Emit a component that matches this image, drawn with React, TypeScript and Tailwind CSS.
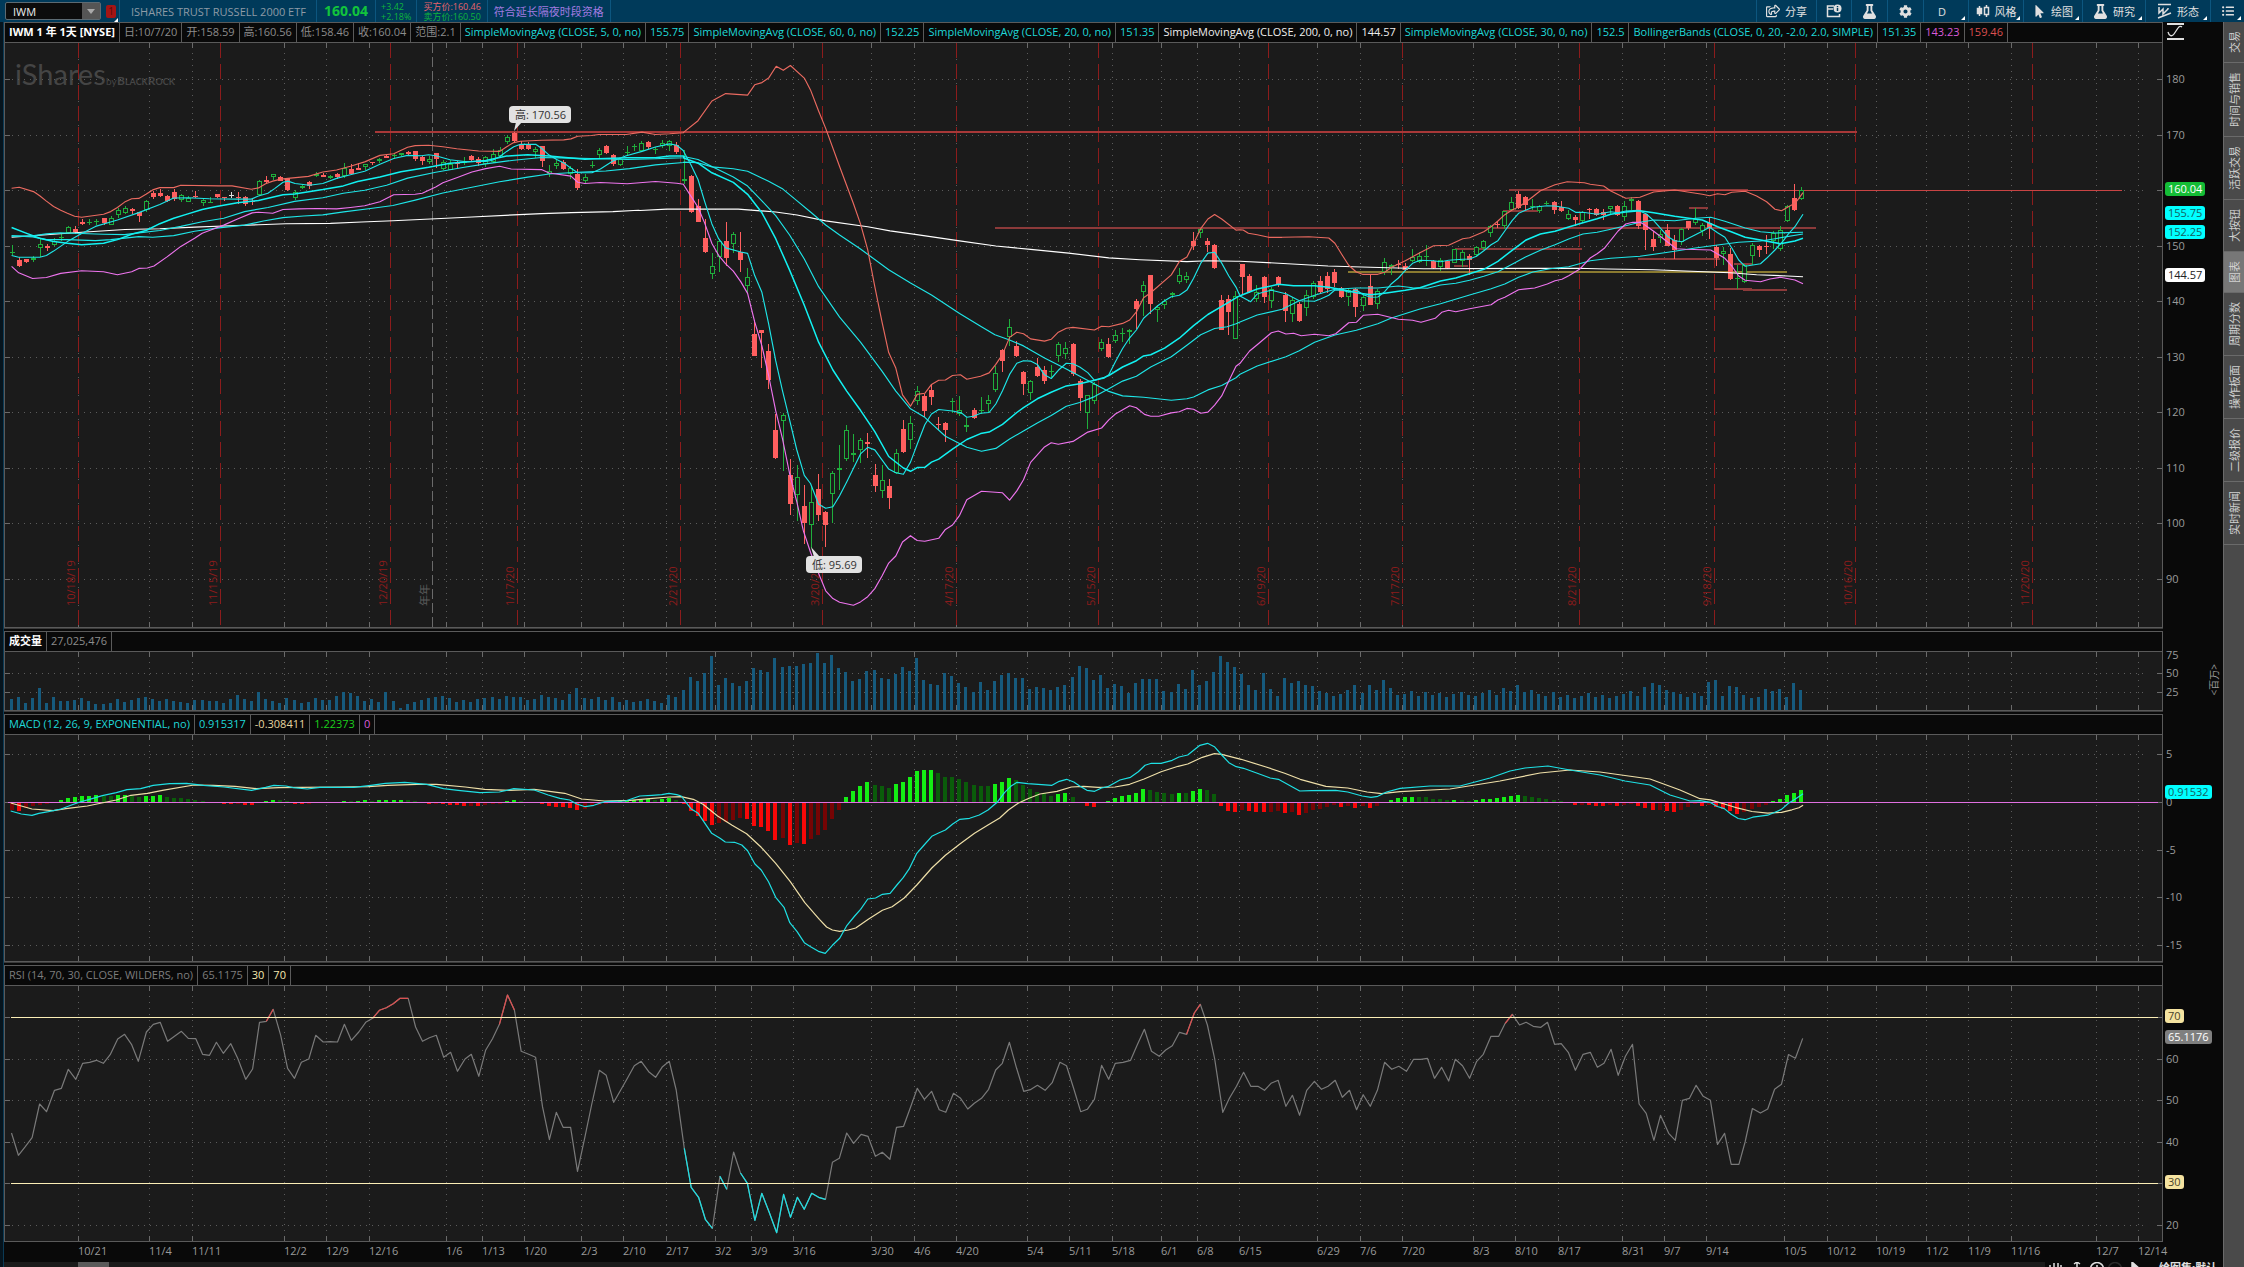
import React from "react";
import { FaRegShareSquare, FaFlask, FaCog, FaMousePointer, FaListUl } from "react-icons/fa";

/* ---------- coordinate frames for the series ---------- */

type Frame = [number, number, number, number];
const EARLY: Frame = [0, 100, 2.24, 2.958];
const SPRING: Frame = [640, 50, 2.24, 2.7034];
const LATE: Frame = [1240, 150, 2.613, 3];
const LOW_A: Frame = [0, 620, 2.063, 3];
const LOW_B: Frame = [640, 620, 2.063, 3];
const PX: Frame = [0, 0, 1, 1];
const TAIL: Frame = [1700, 620, 2.882, 2.4235];
const RSI_A: Frame = [0, 960, 1.742, 3];
const RSI_B: Frame = [880, 960, 1.8233, 3];

function trace(...parts: [Frame, string][]): string {
  return parts
    .map(([f, s]) =>
      s
        .trim()
        .split(/\s+/)
        .map((p) => {
          const [x, y] = p.split(",").map(Number);
          return `${(f[0] + x / f[2]).toFixed(1)},${(f[1] + y / f[3]).toFixed(1)}`;
        })
        .join(" "),
    )
    .join(" ");
}

const barX = (i: number) => Math.round(11.6 + i * 7.073);

/* ---------- price candles: colour, high, body top, body bottom, low ---------- */

const CANDLES_EARLY = `g430 450 452 458;r465 473 490 495;r470 471 478 482;g462 468 474 478;g408 426 437 464;r425 433 437 446;g408 416 430 432;g397 406 408 416;g374 377 392 397;r373 382 391 397;r352 362 367 370;g352 361 363 370;g351 359 361 370;r348 349 364 370;g344 349 369 371;g318 326 339 348;g313 320 333 336;r320 321 328 338;r330 332 342 362;g296 300 325 332;r270 275 287 292;r262 275 284 288;r282 284 298 302;r264 272 293 300;g278 281 297 302;g285 291 301 303;r270 285 287 290;g292 297 306 313;g287 301 304 306;r278 279 287 290;r286 288 290 300;w273 281 283 291;r272 288 290 308;r285 287 307 313;r293 300 302 312;g238 241 282 285;r226 237 243 248;g219 220 229 236;r225 229 239 241;r230 232 265 270;g265 273 289 297;g250 255 259 262;r240 242 255 262;g212 220 226 229;r215 222 227 229;g222 226 230 234;r216 219 227 235;g186 202 225 232;r190 203 218 222;r187 202 206 208;g188 190 199 206;r183 183 185 193;g172 174 181 186;r164 166 171 173;g160 164 166 175;g156 157 162 166;r152 155 159 166;r150 152 174 181;r166 169 179 192;g166 175 184 189;r156 158 174 200;g178 183 205 207;g178 189 206 208;r180 187 189 200;g170 184 187 193;r163 167 178 182;r170 174 187 195;g165 170 189 198;g145 161 184 187;g140 147 165 168;g105 110 125 130;r95 97 121 124;r122 130 144 148;r125 132 144 148;g138 146 153 173;r135 137 179 197;g192 210 218 228;g178 187 194 204;r178 184 203 206;g196 202 218 233;r205 218 260 266;g220 229 241 246;g180 191 196 201;g142 149 163 172;r134 137 156 159;r160 164 188 195;g172 176 193 194;g137 153 156 164;g131 135 138 150;g120 127 150 155;r122 125 138 145;g138 144 146 160;g119 128 135 142;g119 122 136 152;r124 134 153 159`;
const CANDLES_SPRING = `g270 350 353 363;r339 341 437 440;r402 422 464 466;r458 508 545 548;g548 585 606 620;g512 515 560 599;r465 515 562 585;g491 498 524 550;r492 545 569 599;g590 615 639 656;r730 768 826 828;r757 757 765 860;r795 814 891 916;r984 1027 1102 1107;g980 988 1004 1137;r1107 1150 1226 1258;g1122 1155 1204 1272;r1176 1233 1280 1336;g1180 1223 1285 1345;r1147 1188 1258 1272;r1246 1249 1283 1343;g1138 1144 1199 1279;g1068 1131 1136 1190;g1014 1028 1107 1112;g1038 1090 1096 1115;g1050 1055 1082 1117;r1036 1060 1064 1103;r1120 1150 1180 1195;g1122 1163 1193 1210;r1160 1179 1210 1242;g1080 1090 1144 1147;r1000 1025 1086 1090;g990 1009 1055 1080;g909 923 949 960;r930 936 975 993;r905 920 937 960;r993 1012 1014 1027;r1005 1008 1026 1060;g940 950 951 980;g935 972 984 990;g995 1014 1018 1032;r967 973 995 998;g937 974 977 983;g932 945 957 980;g855 872 920 925;r808 812 842 870;g728 748 777 800;r787 799 826 830;r869 871 902 932;g893 896 926 947;r832 857 880 884;r855 866 894 903;g852 868 870 883;g790 794 828 843;g790 805 823 834;r793 795 875 880;r890 895 940 975;g932 934 980 1024;g898 904 950 958;g780 790 807 815;r778 796 829 833;g757 770 787 793;g752 765 768 790;g755 756 762 795;r672 678 699 755;g625 634 655 720;r608 609 686 713;g690 696 704 734;g672 678 690 700;g655 658 662 670;g590 607 626 633;g600 612 622 630;r493 516 530 540;g482 484 496 507;r507 517 527 545;r525 527 588 592;r663 675 756 758;r662 673 707 770;g652 666 780 782;r578 579 615 660;r605 611 654 658;g635 655 674 682;r610 614 667 683;g640 645 678 697;r610 615 634 640;r655 662 705 736;g668 675 713 736;r680 687 732 734;g650 663 698 720;g625 631 668 672;r610 624 653 660;r600 611 645 658;r592 600 629 640`;
const CANDLES_LATE = `r412 415 440 445;g413 420 442 468;r413 418 470 500;g428 440 468 482;r374 408 464 466;g418 424 463 478;g325 337 366 374;g343 346 352 374;r330 342 345 358;r338 349 360 364;g298 320 332 336;g306 318 335 340;g285 317 322 348;r330 334 353 357;g324 329 352 364;r330 334 354 356;g296 298 338 340;g300 307 334 350;r312 318 331 376;g288 292 316 320;g270 274 295 300;g224 227 250 260;r214 221 226 234;g183 183 229 236;g142 157 180 184;r123 132 173 176;r138 141 164 180;g146 169 171 180;g165 168 184 190;g153 158 162 166;r153 156 181 192;r153 172 182 185;g180 193 208 210;r196 202 211 228;g184 185 214 220;r175 176 181 208;r174 178 194 198;r178 186 194 209;g168 169 178 192;r165 168 196 199;g154 168 202 213;g141 148 153 180;r150 153 227 237;r190 192 241 299;r242 267 290 303;g240 252 265 280;r222 240 287 288;r254 271 299 326;g234 236 276 284;r212 214 233 240;g174 208 220 226;g220 226 244 258;r200 220 233 267;r285 291 323 348;g292 304 311 346;r294 311 386 390;g346 384 388 418;g342 345 397 400;g280 286 317 345;r284 288 299 322;r256 289 291 312;g244 248 273 298;g228 240 298 303;g165 168 214 216;r102 144 180 182;g110 121 147 150`;

type Candle = { c: string; hi: number; top: number; bot: number; lo: number };
function parseCandles(s: string, f: Frame): Candle[] {
  return s.split(";").map((t) => {
    const [hi, top, bot, lo] = t
      .slice(1)
      .split(" ")
      .map((n) => Math.round(f[1] + Number(n) / f[3]));
    return { c: t[0], hi, top, bot, lo };
  });
}
const CANDLES = [
  ...parseCandles(CANDLES_EARLY, EARLY),
  ...parseCandles(CANDLES_SPRING, SPRING),
  ...parseCandles(CANDLES_LATE, LATE),
];

/* ---------- overlays ---------- */

const UPPER = trace(
  [EARLY, "26,261 43,258 75,271 89,283 104,299 120,315 136,326 151,335 167,344 183,347 232,338 248,330 263,318 279,302 295,292 311,291 327,279 342,266 358,259 389,259 405,252 490,254 520,254 563,264 579,260 595,248 611,240 629,234 645,232 691,226 723,213 754,207 785,196 817,183 851,164 882,159 913,140 930,135 960,134 992,138 1023,144 1072,151 1119,152 1135,138 1151,126 1166,122 1213,119 1263,118 1279,115 1294,107 1325,105 1341,102 1403,102 1438,95 1468,102 1500,100 1531,97"],
  [SPRING, "98,222 130,191 161,138 192,118 241,122 257,94 273,88 288,76 305,44 321,55 337,42 368,76 382,108 400,165 416,212 447,315 478,415 494,470 510,540 526,640 542,735 557,818 573,860 588,932 606,963 621,931 638,928 653,904 669,893 684,892 700,880 718,878 732,890 763,882 782,873 797,850 812,823 828,777 844,763 859,767 875,781 906,787 921,782 937,763 955,752 970,750 1018,757 1034,747 1050,748 1081,739 1097,730 1112,708 1128,670 1144,656 1190,608 1208,572 1225,560 1240,523 1256,483 1272,457 1287,445 1303,457 1335,487"],
  [LATE, "0,239 8,240 22,250 45,254 75,262 110,262 180,260 232,264 248,280 268,317 284,346 304,366 320,373 360,373 378,367 396,352 414,342 432,332 451,320 470,308 506,287 545,286 582,266 600,263 637,245 656,230 674,213 692,194 711,180 728,171 746,157 765,140 785,122 823,104 855,95 900,98 915,103 950,108 969,123 1008,145 1045,142 1081,126 1136,120 1208,133 1227,137 1248,131 1267,134 1285,127 1320,124 1350,138 1376,155 1398,178 1415,182 1432,171 1450,160 1460,146 1471,128"],
);
const LOWER = trace(
  [EARLY, "26,492 42,511 73,528 104,525 136,513 183,505 232,508 263,517 295,508 311,498 330,497 345,491 374,464 405,433 436,409 453,394 469,386 501,370 532,352 565,334 579,332 611,335 634,324 670,322 710,321 754,322 785,318 817,313 851,301 882,280 930,279 946,276 976,257 992,245 1023,230 1057,213 1088,203 1119,196 1145,204 1213,206 1230,216 1279,225 1294,243 1310,247 1345,244 1405,248 1468,241 1516,246 1531,249"],
  [SPRING, "98,365 114,395 130,425 145,468 161,523 176,555 192,578 209,598 226,627 241,658 257,735 273,800 288,880 304,975 319,1050 335,1145 351,1220 366,1300 382,1358 400,1415 416,1462 432,1483 447,1493 478,1501 494,1492 510,1478 526,1456 542,1422 557,1387 573,1368 588,1330 606,1313 621,1326 638,1328 669,1320 684,1296 700,1284 716,1258 732,1216 765,1193 812,1197 828,1217 844,1192 859,1162 875,1115 906,1073 921,1062 937,1066 970,1058 1003,1033 1034,1022 1050,1000 1065,984 1097,962 1112,967 1130,985 1144,990 1162,990 1190,981 1208,978 1225,969 1240,971 1256,982 1272,979 1287,960 1303,935 1319,895 1335,855"],
  [LATE, "0,640 25,603 45,584 82,548 100,543 120,552 140,550 160,557 195,553 232,557 250,551 284,518 304,517 322,496 360,493 414,508 451,511 473,517 510,505 527,487 545,481 564,485 600,476 656,464 674,450 692,442 711,430 728,419 770,414 803,402 823,392 841,388 859,377 887,358 915,324 933,311 952,295 988,243 1008,222 1026,217 1045,217 1055,223 1081,244 1118,277 1140,296 1165,298 1230,300 1248,312 1267,325 1285,348 1303,378 1320,391 1360,395 1385,387 1412,382 1450,390 1471,401"],
);
const SMA5 = trace(
  [EARLY, "26,460 42,465 89,465 104,460 120,447 151,419 183,395 214,374 263,355 311,333 358,309 389,290 421,289 469,292 532,293 563,293 579,284 600,276 615,262 634,243 645,240 661,247 693,252 723,247 754,232 785,221 817,211 851,190 882,173 913,164 944,165 960,162 976,165 1008,177 1040,182 1088,182 1103,178 1119,168 1135,152 1151,138 1166,131 1200,131 1213,143 1230,163 1247,176 1263,186 1279,202 1294,215 1326,215 1345,204 1373,180 1403,165 1438,152 1468,139 1500,130 1516,134 1531,150"],
  [SPRING, "98,275 114,310 130,350 145,410 161,470 176,510 192,535 226,546 241,550 257,610 273,655 288,740 304,840 319,920 335,1000 351,1080 368,1150 382,1172 400,1228 416,1239 432,1235 447,1205 463,1168 494,1092 510,1074 526,1081 542,1108 557,1133 573,1143 590,1147 606,1114 621,1066 638,1013 653,984 669,972 700,976 720,981 732,993 747,990 763,982 782,980 797,957 812,921 828,877 844,847 859,840 875,841 890,850 906,878 921,888 937,866 955,847 970,848 985,857 1003,872 1018,893 1040,887 1050,878 1065,843 1081,807 1097,778 1112,757 1128,725 1144,708 1159,692 1175,678 1190,667 1208,663 1225,649 1240,617 1256,577 1272,549 1287,547 1303,576 1319,611 1335,641"],
  [LATE, "0,438 28,455 45,432 65,425 82,421 120,431 155,452 195,454 212,446 232,436 248,420 268,421 284,427 304,420 322,434 342,442 360,441 378,425 396,401 414,384 432,361 451,340 470,331 506,332 524,335 545,331 582,328 600,327 618,319 637,302 656,284 674,272 692,243 711,212 728,190 746,181 765,172 803,167 823,168 859,175 877,187 896,187 933,193 969,185 988,188 1008,183 1040,181 1062,192 1081,212 1099,235 1118,260 1136,272 1155,275 1173,264 1190,254 1208,244 1227,232 1248,248 1267,262 1285,294 1303,330 1320,349 1360,341 1376,325 1398,300 1420,272 1432,253 1450,230 1471,193"],
);
const SMA20 = trace(
  [EARLY, "26,377 57,393 89,409 120,419 151,424 183,428 232,424 263,413 295,397 327,386 358,366 389,350 421,337 453,324 485,315 532,304 579,297 634,280 660,278 723,265 769,254 801,241 851,228 898,212 960,199 1008,187 1088,179 1135,166 1182,162 1230,166 1279,172 1310,175 1405,171 1468,171 1500,166 1531,166"],
  [SPRING, "98,292 130,306 161,332 209,358 241,390 273,440 304,510 335,595 368,690 400,790 432,865 463,922 494,974 526,1032 557,1099 590,1130 606,1139 621,1129 638,1128 653,1114 669,1106 700,1079 732,1053 763,1037 782,1033 812,1012 844,980 859,967 890,943 921,925 955,908 985,902 1018,893 1040,885 1050,880 1081,857 1112,840 1128,827 1144,824 1175,806 1208,779 1240,745 1272,715 1303,693 1335,670"],
  [LATE, "0,437 45,417 100,403 140,407 195,407 232,412 268,419 304,428 342,434 378,430 432,421 470,413 524,393 564,384 600,371 637,358 674,334 711,301 746,271 785,252 823,244 859,231 896,218 933,206 969,193 1008,186 1045,182 1081,188 1136,199 1173,205 1208,210 1248,230 1285,246 1320,262 1360,270 1412,281 1450,273 1471,265"],
);
const SMA30 = trace(
  [EARLY, "26,403 73,402 104,396 136,393 183,395 232,397 279,398 311,393 358,386 405,374 453,360 501,350 548,330 600,318 660,300 723,289 769,276 817,267 866,252 913,231 976,214 1040,199 1088,189 1151,178 1213,170 1279,172 1325,173 1405,176 1468,174 1500,172 1531,171"],
  [SPRING, "98,288 130,296 161,315 209,343 241,368 273,408 304,448 335,500 368,565 400,640 447,722 494,790 542,868 573,922 606,970 638,993 653,1010 684,1044 732,1074 765,1085 797,1077 828,1052 859,1030 890,1008 921,988 955,963 985,953 1018,937 1050,916 1081,895 1112,882 1144,857 1190,829 1225,798 1256,770 1287,753 1315,748 1335,740"],
  [LATE, "0,516 45,495 110,478 155,452 195,436 248,418 304,414 360,414 414,408 451,413 490,415 524,405 564,400 600,391 637,379 674,365 711,343 746,321 785,301 823,284 859,267 896,252 933,247 969,238 1008,227 1045,217 1081,210 1136,212 1190,205 1230,202 1267,214 1320,234 1360,245 1398,249 1471,247"],
);
const SMA60 = trace(
  [EARLY, "26,401 73,405 104,413 151,413 214,416 248,413 311,404 342,406 389,401 436,388 485,379 548,370 590,358 634,348 680,343 723,340 770,331 830,321 880,312 930,296 992,275 1057,258 1119,242 1182,228 1230,219 1294,214 1357,210 1410,203 1468,192 1531,185"],
  [SPRING, "98,303 130,305 161,316 209,321 241,328 288,355 320,376 352,408 384,440 416,473 447,500 494,538 557,594 606,630 653,662 716,712 763,747 795,770 828,784 859,800 906,833 955,862 1018,903 1050,923 1081,935 1128,939 1190,947 1225,943 1240,938 1272,919 1303,907 1335,886"],
  [LATE, "0,673 45,648 120,620 155,602 195,577 248,555 304,541 360,521 396,504 470,477 524,461 600,435 656,416 692,402 728,382 765,366 810,356 859,350 915,332 969,325 1045,319 1118,307 1190,294 1248,285 1303,277 1360,273 1398,266 1471,252"],
);
const SMA200 = trace(
  [EARLY, "26,406 120,397 183,391 280,383 358,381 436,376 516,372 580,369 640,366 740,365 810,361 880,357 1000,350 1057,346 1151,340 1213,336 1280,333 1373,330 1430,326"],
  [SPRING, "0,434 60,430 220,430 304,438 352,446 416,462 510,478 560,489 620,499 716,516 797,530 875,539 960,549 1050,562 1120,567 1225,572 1272,570 1335,571"],
  [LATE, "0,334 90,339 230,348 340,352 480,356 880,355 960,357 1080,359 1180,364 1280,368 1350,374 1430,378 1471,380"],
);

/* x1, x2, y, colour, thickness */
const LEVELS: [number, number, number, string, number][] = [
  [375, 1857, 132, "#a83838", 2],
  [995, 1816, 228, "#8c3a3a", 2],
  [1509, 1748, 190, "#8c3a3a", 2],
  [1557, 2122, 191, "#c84444", 1],
  [1503, 1538, 211, "#8c3a3a", 2],
  [1455, 1582, 249, "#8c3a3a", 2],
  [1454, 1468, 266, "#8c3a3a", 2],
  [1348, 1787, 272, "#8a7a30", 2],
  [1638, 1720, 259, "#8c3a3a", 2],
  [1689, 1708, 208, "#8c3a3a", 2],
  [1734, 1752, 264, "#8c3a3a", 2],
  [1714, 1752, 289, "#8c3a3a", 2],
  [1743, 1787, 290, "#8c3a3a", 2],
];

/* ---------- volume, MACD, RSI ---------- */

const VOLUME_TOPS = [
  237, 231, 249, 234, 204, 249, 231, 243, 243, 240, 234, 243, 252, 252, 249, 237, 246, 240, 234, 231, 237, 243, 237, 243, 246, 249, 240, 240, 243, 243, 249, 237, 225, 237, 243, 216, 237, 243, 249, 234, 240, 249, 246, 234, 240, 240, 228, 216, 219, 228, 243, 237, 246, 216, 243, 264, 252, 246, 240, 234, 231, 228, 234, 246, 240, 246, 237, 234, 231, 237, 228, 231, 231, 240, 237, 225, 231, 234, 240, 222, 204, 234, 237, 231, 240, 231, 246, 240, 246, 243, 237, 243, 249, 225, 231, 210, 171, 183, 159, 108,
  195, 174, 189, 198, 183, 144, 150, 156, 114, 141, 138, 138, 132, 129, 99, 129, 105, 144, 156, 183, 177, 153, 150, 174, 177, 162, 141, 153, 114, 180, 192, 195, 159, 168, 189, 201, 216, 186, 210, 183, 165, 159, 174, 174, 207, 201, 204, 210, 201, 195, 171, 138, 144, 180, 165, 204, 192, 198, 219, 189, 177, 177, 177, 213, 216, 192, 207, 150, 195, 183, 156, 108, 126, 141, 162, 195, 210, 159, 207, 228, 174, 189, 183, 195, 198, 213, 219, 228, 222, 210, 195, 219, 195, 210, 180, 204, 225,
  222, 213, 228, 216, 225, 219, 231, 222, 216, 225, 228, 219, 210, 225, 204, 213, 195, 216, 210, 222, 228, 216, 231, 225, 234, 228, 219, 231, 225, 234, 228, 222, 213, 228, 201, 189, 195, 210, 216, 222, 231, 219,
  228, 186, 180, 228, 198, 201, 225, 234, 231, 207, 213, 207, 231, 189, 210,
];

const HIST = [
  -20, -24, -14, -8, -5, -3, 0, 7, 13, 16, 18, 19, 20, 19, 18, 21, 22, 17, 16, 17, 19, 20, 16, 13, 12, 10, 7, 4, 1, 0, -2, -3, -2, -5, -6, -1, 4, 7, 5, 3, -2, -4, -3, -1, 0, 0, 1, 4, 3, 4, 4.5, 4, 5, 6, 6.5, 7, 5, 3, 0, -2, -2, -4, -5, -7, -8, -7.5, -9, -6, -4, -2, 4, 7, 3, -1, -1, -4, -10, -11, -13, -14, -20, -19, -9, -5, -3, 1, 2, 3, 5, 6, 8, 7, 10, 10.5, 7, -4, -23, -40, -53, -65,
  -60, -56, -50, -45, -47, -68, -72, -83, -110, -106, -125, -120, -122, -107, -95, -80, -47, -20, 16, 34, 49, 61, 52, 49, 43, 55, 61, 76, 94, 94.5, 97, 88, 76, 75.8, 70, 61, 52, 49, 48.8, 55, 61, 73, 67, 52, 40, 31, 28, 19, 25, 25.5, 16, 1, -8, -11, -1, 4, 13, 19, 22, 28, 40, 36, 31, 28, 25, 28, 27.5, 34, 40, 37, 25, -8, -23, -26, -22, -23, -26, -26.5, -26, -23, -29, -28, -35, -29, -20, -17, -13, -7, -11, -8, -14, -9, -14, -10, 0, 7, 13,
  14, 15, 15, 14, 9, 8, 5, 7, 6, 4, 5, 8, 10, 12, 14, 18, 20, 17, 15, 12, 10, 5, 2, -1, -5, -5, -6, -8, -9, -7, -9, -5, -2, -10, -16, -22, -20, -24, -26, -20, -12, -4,
  -8, -7, -12, -17, -25, -32, -27, -17, -11, -5, 3, 9, 22, 28, 36,
];

const MACD = trace(
  [LOW_A, "22,573 44,582 66,586 80,580 100,575 126,567 146,556 165,546 190,536 211,527 240,518 262,509 290,506 316,496 350,491 385,490 420,496 462,501 519,511 548,502 565,496 590,498 605,503 634,507 660,502 700,502 730,502 765,496 795,490 835,487 880,493 915,506 945,511 990,518 1030,516 1060,506 1102,510 1131,525 1155,535 1175,540 1190,552 1207,560 1225,556 1247,545 1290,543 1320,528 1345,526 1365,524 1380,520 1396,524"],
  [LOW_B, "85,528 105,566 120,580 148,640 165,655 176,666 195,667 210,675 222,692 237,732 250,750 265,785 280,832 297,862 309,908 324,935 339,968 352,980 368,994 382,1000 397,976 412,955 427,916 443,888 455,868 470,837 486,834 500,823 516,820 530,795 543,773 556,745 571,700 586,675 602,649 617,638 630,630 645,612 660,598 680,595 700,585 718,570 738,545 752,518 765,499 778,487 800,491 850,496 865,484 880,478 895,486 907,498 922,511 938,514 952,504 965,500 990,480 1012,472 1028,455 1042,436 1055,430 1075,430 1098,421 1112,411 1130,405 1155,376 1171,370 1185,380 1200,405 1215,428 1230,440 1245,445 1272,459 1300,474 1317,478 1345,500 1361,513 1385,512 1435,511 1460,516 1490,528 1508,532 1522,529 1540,516 1568,505"],
  [PX, "1430,786 1460,786 1490,778 1510,771 1525,768 1548,766 1570,770 1600,775 1625,781 1650,785 1670,795 1690,801"],
  [TAIL, "0,438 30,442 50,452 70,457 90,471 110,481 130,484 152,478 195,473 235,459 255,444 275,434 297,421"],
);
const SIGNAL = trace(
  [LOW_A, "22,549 66,567 110,572 136,566 180,558 240,540 270,526 304,520 335,511 400,495 440,496 485,499 530,506 575,503 620,502 700,501 760,500 800,496 860,493 900,493 960,501 1000,508 1050,511 1102,508 1165,520 1200,537 1247,543 1300,541 1340,536"],
  [LOW_B, "60,531 85,530 110,538 130,553 160,588 190,616 220,641 250,682 280,730 310,785 340,848 370,898 385,921 397,930 412,934 430,930 445,924 471,898 500,871 520,860 545,834 571,795 602,744 630,706 660,672 690,640 718,615 742,594 760,570 780,550 800,536 825,522 860,514 890,501 915,499 945,502 980,501 1010,493 1040,477 1075,455 1110,439 1130,432 1160,412 1185,401 1200,403 1240,418 1290,440 1330,460 1362,478 1415,499 1460,504 1500,516 1530,521 1568,515"],
  [PX, "1450,789 1500,781 1540,773 1570,770 1600,772 1650,779 1680,790"],
  [TAIL, "0,433 30,436 70,446 110,456 150,464 195,468 235,466 265,460 285,455 297,449"],
);

const RSI = trace(
  [RSI_A, "20,519 32,586 44,560 56,533 69,432 81,455 95,391 107,385 119,328 132,358 144,310 156,307 168,301 180,310 192,284 205,237 217,223 229,253 241,304 255,216 267,193 279,187 292,244 304,229 316,214 328,235 341,236 353,283 365,286 377,247 389,280 402,251 414,295 428,358 440,327 452,187 464,184 476,148 489,226 501,325 513,355 525,307 538,297 550,226 563,246 575,245 588,246 600,193 612,241 625,216 637,187 649,175 661,151 673,143 685,131 697,115 711,115 724,201 736,244 748,233 760,226 773,292 785,277 797,334 810,297 821,283 834,349 846,271 858,236 870,193 884,105 896,150 908,274 921,283 933,292 945,440 957,539 969,457 981,502 994,502 1006,634 1019,530 1031,432 1044,331 1056,346 1069,427 1081,391 1093,355 1105,317 1117,304 1130,335 1142,352 1154,320 1166,304 1178,390 1192,565 1204,682 1217,712 1229,779 1241,805 1254,649 1266,688 1278,576 1290,639 1302,670 1315,781 1327,700 1340,757 1353,818 1365,703 1377,772 1389,712 1401,748 1414,700 1426,712 1438,718 1450,607 1462,595 1475,519 1487,550 1500,523 1512,529 1525,589 1537,577"],
  [RSI_B, "18,598 30,502 43,499 56,440 68,385 81,418 94,394 108,449 120,457 134,400 147,415 160,447 172,430 185,415 198,388 211,330 223,310 236,247 249,325 262,394 274,389 287,376 301,391 314,368 328,307 340,317 353,385 366,455 378,448 391,418 404,316 417,358 429,310 443,307 457,301 469,255 482,208 495,274 509,289 521,270 533,257 546,217 559,223 573,159 584,133 597,195 610,295 625,457 637,415 650,379 663,337 676,379 689,379 701,391 713,370 726,361 740,439 752,406 765,466 778,391 792,364 805,388 817,379 830,361 843,412 856,391 869,449 881,404 894,439 907,391 920,307 933,328 946,319 960,334 973,298 986,298 998,295 1011,355 1024,322 1037,363 1049,298 1062,317 1075,355 1088,304 1100,283 1114,229 1128,229 1140,190 1153,163 1166,195 1178,187 1191,199 1205,202 1217,187 1230,253 1242,251 1255,277 1268,331 1282,283 1295,277 1308,322 1320,310 1333,268 1346,346 1359,289 1372,253 1384,432 1397,460 1411,541 1423,466 1438,520 1450,541 1463,421 1476,415 1488,376 1501,409 1514,421 1527,553 1540,520 1552,613 1566,613"],
  [TAIL, "112,1319 130,1265 151,1184 174,1195 195,1185 215,1137 235,1125 255,1053 275,1062 296,1014"],
);
const RSI_HOT = [
  trace([RSI_A, "464,184 476,148"]),
  trace([RSI_A, "649,175 661,151 673,143 685,131 697,115 711,115"]),
  trace([RSI_A, "870,193 884,105 896,150"]),
  trace([RSI_B, "559,223 573,159 584,133"]),
  trace([RSI_B, "1140,190 1153,163"]),
];
const RSI_COLD = [
  trace([RSI_A, "1192,565 1204,682 1217,712 1229,779 1241,805"]),
  trace([RSI_A, "1254,649 1266,688"]),
  trace([RSI_A, "1290,639 1302,670 1315,781 1327,700 1340,757 1353,818 1365,703 1377,772 1389,712 1401,748 1414,700 1426,712 1438,718"]),
];

/* ---------- time axis ---------- */

const DATES: [number, string][] = [
  [78, "10/21"], [149, "11/4"], [192, "11/11"], [284, "12/2"], [326, "12/9"], [369, "12/16"],
  [446, "1/6"], [482, "1/13"], [524, "1/20"], [581, "2/3"], [623, "2/10"], [666, "2/17"],
  [715, "3/2"], [751, "3/9"], [793, "3/16"], [871, "3/30"], [914, "4/6"], [956, "4/20"],
  [1027, "5/4"], [1069, "5/11"], [1112, "5/18"], [1161, "6/1"], [1197, "6/8"], [1239, "6/15"],
  [1317, "6/29"], [1360, "7/6"], [1402, "7/20"], [1473, "8/3"], [1515, "8/10"], [1558, "8/17"],
  [1622, "8/31"], [1664, "9/7"], [1706, "9/14"], [1784, "10/5"], [1827, "10/12"], [1876, "10/19"],
  [1926, "11/2"], [1968, "11/9"], [2011, "11/16"], [2096, "12/7"], [2138, "12/14"],
];
const EXPIRIES: [number, string][] = [
  [78, "10/18/19"], [220, "11/15/19"], [390, "12/20/19"], [517, "1/17/20"], [680, "2/21/20"],
  [822, "3/20/20"], [956, "4/17/20"], [1098, "5/15/20"], [1268, "6/19/20"], [1402, "7/17/20"],
  [1579, "8/21/20"], [1714, "9/18/20"], [1855, "10/16/20"], [2032, "11/20/20"],
];

const L = 5;
const R = 2162;

function Grid({ top, bottom, rows, ticks }: { top: number; bottom: number; rows: number[]; ticks?: number[] }) {
  return (
    <g shapeRendering="crispEdges">
      {rows.map((y) => (
        <line key={y} x1={L + 7} x2={R - 15} y1={y + 0.5} y2={y + 0.5} stroke="#5c5c5c" strokeDasharray="1 5" />
      ))}
      {(ticks ?? rows).map((y) => (
        <path key={y} d={`M${L} ${y + 0.5}h5M${R - 5} ${y + 0.5}h5`} stroke="#6a6a6a" />
      ))}
      {DATES.map(([x]) => (
        <g key={x}>
          <line x1={x + 0.5} x2={x + 0.5} y1={top + 10} y2={bottom - 8} stroke="#5c5c5c" strokeDasharray="1 5" />
          <path d={`M${x + 0.5} ${top}v5M${x + 0.5} ${bottom - 5}v5`} stroke="#6a6a6a" />
        </g>
      ))}
    </g>
  );
}

function PlotSvg({ top, height, label, children }: { top: number; height: number; label: string; children: React.ReactNode }) {
  return (
    <svg
      role="img"
      aria-label={label}
      viewBox={`${L} ${top} ${R - L} ${height}`}
      preserveAspectRatio="none"
      height={height}
      className="block w-full"
    >
      {children}
    </svg>
  );
}

/* ---------- shared page pieces ---------- */

type Cell = { t: string; c: string; b?: boolean };

function Legend({ cells }: { cells: Cell[] }) {
  return (
    <div className="flex h-[21px] overflow-hidden border-y border-[#5a5a5a] bg-[#090909] text-[11px] leading-[18px]">
      {cells.map((cell, i) => (
        <span
          key={i}
          className={`shrink-0 border-r border-[#5a5a5a] px-1 whitespace-nowrap ${cell.c} ${cell.b ? "font-bold" : ""}`}
        >
          {cell.t}
        </span>
      ))}
    </div>
  );
}

type Tag = { y: number; t: string; c: string };

function Axis({ top, height, labels, tags = [], children }: { top: number; height: number; labels: [number, string][]; tags?: Tag[]; children?: React.ReactNode }) {
  return (
    <div className="relative w-[60px] shrink-0 text-[11px] leading-[14px] text-[#9a9a9a]" style={{ height }}>
      {labels.map(([y, t]) => (
        <span key={t} className="absolute left-[3px] -translate-y-1/2" style={{ top: y - top }}>
          {t}
        </span>
      ))}
      {tags.map((tag) => (
        <span key={tag.t} className={`absolute left-[2px] -translate-y-1/2 rounded-[3px] px-[3px] ${tag.c}`} style={{ top: tag.y - top }}>
          {tag.t}
        </span>
      ))}
      {children}
    </div>
  );
}

function Panel({ cells, axis, children }: { cells: Cell[]; axis: React.ReactNode; children: React.ReactNode }) {
  return (
    <section className="flex">
      <div className="min-w-0 flex-1 border-r border-l border-[#5a5a5a]">
        <Legend cells={cells} />
        <div className="border-b border-[#5a5a5a] bg-[#1b1b1b]">{children}</div>
      </div>
      {axis}
    </section>
  );
}

const Divider = () => <div className="mr-[60px] h-[3px] border-t border-[#3a3a3a] bg-[#090909]" />;

function ToolButton({ w, label, text, corner, children }: { w: string; label: string; text?: string; corner?: boolean; children?: React.ReactNode }) {
  return (
    <button aria-label={label} className={`relative flex shrink-0 items-center justify-center gap-[5px] border-l border-[#0c567f] ${w}`}>
      {children}
      {text && <span>{text}</span>}
      {corner && <i className="absolute right-[3px] bottom-[2px] border-b-4 border-l-4 border-b-white border-l-transparent" />}
    </button>
  );
}

const CYAN = "text-[#1fd8d8]";
const GREY = "text-[#8c8c8c]";

const MAIN_CELLS: Cell[] = [
  { t: "IWM 1 年 1天 [NYSE]", c: "text-white", b: true },
  { t: "日:10/7/20", c: GREY },
  { t: "开:158.59", c: GREY },
  { t: "高:160.56", c: GREY },
  { t: "低:158.46", c: GREY },
  { t: "收:160.04", c: GREY },
  { t: "范围:2.1", c: GREY },
  { t: "SimpleMovingAvg (CLOSE, 5, 0, no)", c: CYAN },
  { t: "155.75", c: CYAN },
  { t: "SimpleMovingAvg (CLOSE, 60, 0, no)", c: CYAN },
  { t: "152.25", c: CYAN },
  { t: "SimpleMovingAvg (CLOSE, 20, 0, no)", c: CYAN },
  { t: "151.35", c: CYAN },
  { t: "SimpleMovingAvg (CLOSE, 200, 0, no)", c: "text-[#eeeeee]" },
  { t: "144.57", c: "text-[#eeeeee]" },
  { t: "SimpleMovingAvg (CLOSE, 30, 0, no)", c: CYAN },
  { t: "152.5", c: CYAN },
  { t: "BollingerBands (CLOSE, 0, 20, -2.0, 2.0, SIMPLE)", c: CYAN },
  { t: "151.35", c: CYAN },
  { t: "143.23", c: "text-[#d95bd9]" },
  { t: "159.46", c: "text-[#dc5050]" },
];

const TABS = ["交易", "时间与销售", "活跃交易", "大按钮", "图表", "周期分数", "操作板面", "二级报价", "实时新闻"];

function TopBar() {
  return (
    <header className="flex h-[22px] shrink-0 bg-[#003a5a] text-[11px] leading-none text-[#e0e0e0]">
      <div className="flex items-center pl-[5px]">
        <div className="flex h-[18px] w-24 items-center rounded-[2px] border border-[#5c6a72] bg-[#0c0c0c]">
          <input aria-label="Symbol" defaultValue="IWM" className="w-0 flex-1 bg-transparent pl-[7px] text-[11px] text-[#eeeeee] outline-none" />
          <button aria-label="Open symbol list" className="flex h-full w-[18px] items-center justify-center bg-[#555555]">
            <i className="border-x-[4px] border-t-[5px] border-x-transparent border-t-[#aaaaaa]" />
          </button>
        </div>
        <button aria-label="Link group 1" className="relative ml-[5px] h-[13px] w-[10px] rounded-[2px] bg-[#a31515] text-[10px] text-[#5a0808]">
          1
          <i className="absolute -right-[2px] -bottom-[4px] border-b-4 border-l-4 border-b-white border-l-transparent" />
        </button>
      </div>
      <div className="ml-[3px] flex items-center border-l border-[#0c567f] pr-[10px] pl-[11px] text-[11px] text-[#8e9ba6]">ISHARES TRUST RUSSELL 2000 ETF</div>
      <div className="flex items-center border-l border-[#0c567f] px-[7px] text-[14px] font-bold text-[#12c43c]">160.04</div>
      <div className="flex flex-col justify-center gap-px border-l border-[#0c567f] px-[5px] text-[9px] leading-[9px] text-[#10b43c]">
        <span>+3.42</span>
        <span>+2.18%</span>
      </div>
      <div className="flex flex-col justify-center gap-px border-l border-[#0c567f] px-[6px] text-[9px] leading-[9px]">
        <span className="text-[#e8636b]">买方价:160.46</span>
        <span className="text-[#10b43c]">卖方价:160.50</span>
      </div>
      <div className="flex items-center border-x border-[#0c567f] px-[6px] text-[11px] text-[#a07be0]">符合延长隔夜时段资格</div>
      <nav className="ml-auto flex">
        <ToolButton w="w-[60px]" label="分享" text="分享">
          <FaRegShareSquare size={14} />
        </ToolButton>
        <ToolButton w="w-[35px]" label="Calendar info">
          <svg width="16" height="14" viewBox="0 0 16 14" fill="none" stroke="currentColor" strokeWidth="1.5">
            <path d="M8 2H1.5v10.500h12V10M1.500 5H7" />
            <circle cx="11.500" cy="4.500" r="4" fill="currentColor" stroke="none" />
            <path d="M11.500 2v1.200M11.500 4v3" stroke="#003a5a" />
          </svg>
        </ToolButton>
        <ToolButton w="w-9" label="Lab">
          <FaFlask size={15} />
        </ToolButton>
        <ToolButton w="w-[36px]" label="Settings">
          <FaCog size={13} />
        </ToolButton>
        <ToolButton w="w-[45px] pr-2" label="Day aggregation" text="D" corner />
        <ToolButton w="w-[55px]" label="风格" text="风格" corner>
          <svg width="14" height="14" viewBox="0 0 14 14" stroke="currentColor" strokeWidth="1.500">
            <path d="M3.500 2v10M10.500 1v12" />
            <rect x="1.500" y="4.500" width="4" height="5" fill="currentColor" />
            <rect x="8.500" y="3.500" width="4" height="7" fill="#003a5a" />
          </svg>
        </ToolButton>
        <ToolButton w="w-[59px]" label="绘图" text="绘图" corner>
          <FaMousePointer size={13} />
        </ToolButton>
        <ToolButton w="w-[63px]" label="研究" text="研究" corner>
          <FaFlask size={15} />
        </ToolButton>
        <ToolButton w="w-[65px]" label="形态" text="形态" corner>
          <svg width="15" height="16" viewBox="0 0 15 16" fill="none" stroke="currentColor" strokeWidth="1.500">
            <path d="M1 1.500h13M1 15l13-5M2 4v6l4-4v5l5-5v-1" />
          </svg>
        </ToolButton>
        <ToolButton w="w-[34px]" label="Menu" corner>
          <FaListUl size={12} />
        </ToolButton>
      </nav>
    </header>
  );
}

function PriceChart() {
  return (
    <PlotSvg top={43} height={584} label="IWM daily price">
      <g fill="#454545" fontFamily="Lato, sans-serif">
        <text x="15" y="85" fontSize="29">
          iShares
        </text>
        <text x="106" y="85" fontSize="10">
          by
        </text>
        <text x="117" y="85" fontSize="12" fontWeight="700">
          B<tspan fontSize="9">LACK</tspan>R<tspan fontSize="9">OCK</tspan>
        </text>
      </g>
      <Grid top={43} bottom={627} rows={[79, 135, 190, 246, 301, 357, 412, 468, 523, 579]} />
      <g shapeRendering="crispEdges">
        {EXPIRIES.map(([x]) => (
          <line key={x} x1={x + 0.5} x2={x + 0.5} y1={43} y2={627} stroke="#8c1c1c" strokeDasharray="15 6" />
        ))}
        <line x1={432.5} x2={432.5} y1={43} y2={627} stroke="#6a6a6a" strokeDasharray="10 4" />
      </g>
      <g fontSize="11">
        {EXPIRIES.map(([x, t]) => (
          <text key={t} transform={`translate(${x - 3} 606) rotate(-90)`} fill="#8c1c1c">
            {t}
          </text>
        ))}
        <text transform="translate(429 606) rotate(-90)" fill="#5a5a5a">
          年年
        </text>
      </g>
      <g shapeRendering="crispEdges">
        {LEVELS.map(([x1, x2, y, c, w], i) => (
          <rect key={i} x={x1} y={y - 1} width={x2 - x1} height={w} fill={c} />
        ))}
        {CANDLES.map((k, i) => {
          const x = barX(i);
          const h = Math.max(1, k.bot - k.top);
          const color = k.c === "g" ? "#1fae3c" : k.c === "r" ? "#ff5f5f" : "#dddddd";
          const hollow = k.c === "g" && h > 2;
          return (
            <g key={i}>
              <rect x={x} y={k.hi} width={1} height={Math.max(1, k.lo - k.hi)} fill={color} />
              {hollow ? (
                <rect x={x - 1.5} y={k.top + 0.5} width={4} height={h - 1} fill="#1b1b1b" stroke={color} />
              ) : (
                <rect x={x - 2} y={k.top} width={5} height={h} fill={color} />
              )}
            </g>
          );
        })}
      </g>
      <g fill="none" strokeLinejoin="round" strokeWidth="1.150">
        <polyline points={SMA200} stroke="#ffffff" />
        <polyline points={SMA60} stroke="#1ee6e8" />
        <polyline points={SMA30} stroke="#1ee6e8" />
        <polyline points={SMA20} stroke="#12f2f2" strokeWidth="1.500" />
        <polyline points={SMA5} stroke="#1ee6e8" />
        <polyline points={UPPER} stroke="#ea6a60" />
        <polyline points={LOWER} stroke="#ee74ee" />
      </g>
      <g fill="#e2e2e2">
        <path d="M514 131l2-9h6z" />
        <rect x="509" y="106" width="62" height="17" rx="4" />
        <path d="M811 547l3 10h6z" />
        <rect x="806" y="556" width="56" height="17" rx="4" />
      </g>
      <g fontSize="11" fill="#333333">
        <text x="515" y="119">
          高: 170.56
        </text>
        <text x="812" y="569">
          低: 95.69
        </text>
      </g>
    </PlotSvg>
  );
}

function VolumeChart() {
  return (
    <PlotSvg top={652} height={58} label="Volume">
      <Grid top={652} bottom={710} rows={[673, 692]} />
      <g shapeRendering="crispEdges" fill="#165a7d">
        {VOLUME_TOPS.map((t, i) => {
          const y = Math.round(620 + t / 3);
          return <rect key={i} x={barX(i) - 2} y={y} width={3} height={710 - y} />;
        })}
      </g>
    </PlotSvg>
  );
}

function MacdChart() {
  return (
    <PlotSvg top={735} height={226} label="MACD">
      <Grid top={735} bottom={961} rows={[754, 850, 897, 945]} ticks={[754, 802, 850, 897, 945]} />
      <g shapeRendering="crispEdges">
        {HIST.map((v, i) => {
          const prev = i ? HIST[i - 1] : -30;
          const h = Math.round(Math.abs(v) / 3);
          const fill = v >= 0 ? (v > prev ? "#14ee14" : "#0a5c0a") : v < prev ? "#f80808" : "#760404";
          return <rect key={i} x={barX(i) - 2} y={v >= 0 ? 802 - h : 803} width={4} height={h} fill={fill} />;
        })}
        <rect x={8} y={802} width={2150} height={1} fill="#e070e0" />
      </g>
      <g fill="none" strokeLinejoin="round">
        <polyline points={SIGNAL} stroke="#eedfa8" strokeWidth="1.200" />
        <polyline points={MACD} stroke="#1ee0e4" strokeWidth="1.200" />
      </g>
    </PlotSvg>
  );
}

function RsiChart() {
  return (
    <PlotSvg top={986} height={255} label="RSI">
      <Grid top={986} bottom={1241} rows={[1059, 1100, 1142, 1225]} ticks={[1017, 1059, 1100, 1142, 1183, 1225]} />
      <g fill="none" strokeLinejoin="round" strokeWidth="1.200">
        <polyline points={RSI} stroke="#7a7a7a" />
        {RSI_HOT.map((p) => (
          <polyline key={p} points={p} stroke="#dc5050" />
        ))}
        {RSI_COLD.map((p) => (
          <polyline key={p} points={p} stroke="#1ee0e4" />
        ))}
      </g>
      <g fill="#fbeeb6" shapeRendering="crispEdges">
        <rect x={11} y={1017} width={2147} height={1} />
        <rect x={11} y={1183} width={2147} height={1} />
      </g>
    </PlotSvg>
  );
}

export default function App() {
  return (
    <div
      className="flex h-screen flex-col overflow-hidden bg-[#090909]"
      style={{ fontFamily: '"Open Sans", "Noto Sans CJK SC", sans-serif' }}
    >
      <TopBar />
      <div className="flex min-h-0 flex-1">
        <div className="w-1 shrink-0 border-r border-[#0b3a55] bg-[#06141d]" />
        <main className="flex min-w-0 flex-1 flex-col">
          <Panel
            cells={MAIN_CELLS}
            axis={
              <Axis
                top={22}
                height={606}
                labels={[[79, "180"], [135, "170"], [246, "150"], [301, "140"], [357, "130"], [412, "120"], [468, "110"], [523, "100"], [579, "90"]]}
                tags={[
                  { y: 189, t: "160.04", c: "bg-[#14bd36] text-white" },
                  { y: 213, t: "155.75", c: "bg-[#00ffff] text-[#155e5e]" },
                  { y: 232, t: "152.25", c: "bg-[#00ffff] text-[#155e5e]" },
                  { y: 275, t: "144.57", c: "bg-white text-[#222222]" },
                ]}
              >
                <button aria-label="Scale settings" className="absolute top-[1px] left-[4px] text-[#e0e0e0]">
                  <svg width="17" height="17" viewBox="0 0 17 17" fill="none" stroke="currentColor">
                    <path d="M0 1h17M0 16h17" strokeWidth="2" />
                    <path d="M1 9c1 4 4 5 6 2l4-6c1-2 3-2 4-1" strokeWidth="1.300" />
                  </svg>
                </button>
              </Axis>
            }
          >
            <PriceChart />
          </Panel>
          <Divider />
          <Panel
            cells={[
              { t: "成交量", c: "text-white", b: true },
              { t: "27,025,476", c: GREY },
            ]}
            axis={
              <Axis top={631} height={80} labels={[[655, "75"], [673, "50"], [692, "25"]]}>
                <span className="absolute top-[33px] left-[44px] rotate-180 text-[10px] [text-orientation:sideways] [writing-mode:vertical-rl]">&lt;百万&gt;</span>
              </Axis>
            }
          >
            <VolumeChart />
          </Panel>
          <Divider />
          <Panel
            cells={[
              { t: "MACD (12, 26, 9, EXPONENTIAL, no)", c: CYAN },
              { t: "0.915317", c: CYAN },
              { t: "-0.308411", c: "text-[#e6d6a0]" },
              { t: "1.22373", c: "text-[#1cd01c]" },
              { t: "0", c: "text-[#d95bd9]" },
            ]}
            axis={
              <Axis
                top={714}
                height={248}
                labels={[[754, "5"], [802, "0"], [850, "-5"], [897, "-10"], [945, "-15"]]}
                tags={[{ y: 792, t: "0.91532", c: "bg-[#00ffff] text-[#155e5e]" }]}
              />
            }
          >
            <MacdChart />
          </Panel>
          <Divider />
          <Panel
            cells={[
              { t: "RSI (14, 70, 30, CLOSE, WILDERS, no)", c: "text-[#7d7d7d]" },
              { t: "65.1175", c: "text-[#7d7d7d]" },
              { t: "30", c: "text-[#f5e8ae]" },
              { t: "70", c: "text-[#f5e8ae]" },
            ]}
            axis={
              <Axis
                top={965}
                height={277}
                labels={[[1059, "60"], [1100, "50"], [1142, "40"], [1225, "20"]]}
                tags={[
                  { y: 1016, t: "70", c: "bg-[#f5e3a0] text-[#4a4428]" },
                  { y: 1037, t: "65.1176", c: "bg-[#7f7f7f] text-white" },
                  { y: 1182, t: "30", c: "bg-[#f5e3a0] text-[#4a4428]" },
                ]}
              />
            }
          >
            <RsiChart />
          </Panel>
          <svg role="img" aria-label="Dates" viewBox="4 1242 2219 20" preserveAspectRatio="none" height="20" className="block w-full shrink-0">
            <g fontSize="11" fill="#9a9a9a">
              {DATES.map(([x, t]) => (
                <text key={x} x={x} y={1255}>
                  {t}
                </text>
              ))}
            </g>
          </svg>
          <footer className="flex h-[5px] items-start overflow-hidden text-[#e0e0e0]">
            <div className="h-[5px] flex-1 bg-[#1b1b1b] pl-[74px]">
              <div className="h-[5px] w-[31px] bg-[#5a5a5a]" />
            </div>
            <div className="flex w-[178px] items-start gap-1 pl-1">
              <svg width="106" height="16" viewBox="0 0 106 16" fill="none" stroke="currentColor" strokeWidth="1.500">
                <path d="M1 3v4M5 1v5M9 1v5M12 3v4M25 2l3-2 3 2M28 0v8" />
                <circle cx="48" cy="7" r="6.500" />
                <path d="M48 3v8M44 7h8" />
                <circle cx="66" cy="7" r="6.500" stroke="#2a2a2a" />
                <path d="M83 0l9 8h-9z" fill="currentColor" />
              </svg>
              <span className="text-[11px] leading-[12px] font-bold whitespace-nowrap">绘图集:默认</span>
            </div>
          </footer>
        </main>
        <nav aria-label="Gadgets" className="flex w-[21px] shrink-0 flex-col border-l border-[#6a6a6a] bg-[#4a4a4a] text-[11px] leading-[18px] text-[#d0d0d0]">
          {TABS.map((t) => (
            <button
              key={t}
              className={`flex justify-center border-b border-[#6a6a6a] py-[9px] pl-[2px] ${t === "图表" ? "bg-[#777777]" : ""}`}
            >
              <span className="block rotate-180 whitespace-nowrap [text-orientation:sideways] [writing-mode:vertical-rl]">{t}</span>
            </button>
          ))}
        </nav>
      </div>
    </div>
  );
}
